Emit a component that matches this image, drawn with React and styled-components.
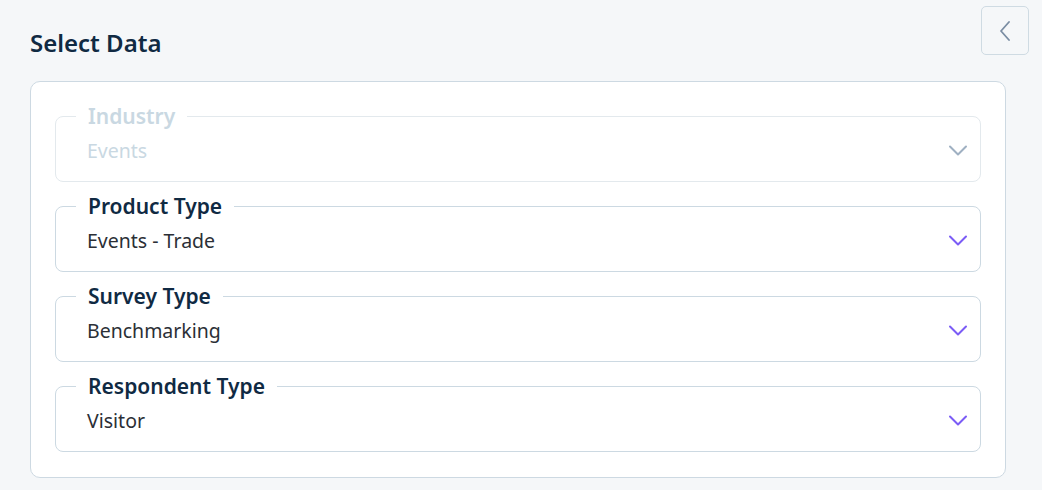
import React from "react";
import styled, { createGlobalStyle } from "styled-components";

const Global = createGlobalStyle`
  html, body { margin: 0; padding: 0; background: #f5f7f9; }
  body { font-family: "Noto Sans", "Open Sans", sans-serif; }
  * { box-sizing: border-box; }
`;

const Page = styled.div`
  width: 1042px;
  height: 490px;
  padding: 6px 13px 0 30px;
  background: #f5f7f9;
`;

const Header = styled.div`
  display: flex;
  justify-content: space-between;
  align-items: flex-start;
`;

const Title = styled.h1`
  margin: 21px 0 0;
  font-size: 24px;
  line-height: 32px;
  font-weight: 600;
  color: #102a43;
`;

const BackButton = styled.button`
  width: 48px;
  height: 49px;
  border: 1px solid #cfdbe3;
  border-radius: 5px;
  background: #f5f7f9;
  display: flex;
  align-items: center;
  justify-content: center;
  padding: 0;
  cursor: pointer;
`;

const Card = styled.div`
  margin: 22px 23px 0 0;
  background: #fff;
  border: 1px solid #cdd9e2;
  border-radius: 10px;
  padding: 22px 24px 25px 24px;
  display: flex;
  flex-direction: column;
  gap: 12px;
`;

const Field = styled.fieldset`
  margin: 0;
  padding: 0 12px 0 20px;
  border: 1px solid ${(p) => (p.$disabled ? "#e3e9ed" : "#ccd9e2")};
  border-radius: 8px;
  min-width: 0;
`;

const Legend = styled.legend`
  padding: 0 12px;
  font-size: 21px;
  line-height: 24px;
  font-weight: 600;
  color: ${(p) => (p.$disabled ? "#c9d8e2" : "#102a43")};
`;

const Row = styled.div`
  display: flex;
  align-items: center;
  justify-content: space-between;
  height: 24px;
  margin: 11px 0 18px;
  padding-left: 11px;
`;

const Value = styled.span`
  font-size: 19.5px;
  line-height: 24px;
  color: ${(p) => (p.$disabled ? "#c9d8e2" : "#2b2f36")};
`;

const Chevron = ({ color }) => (
  <svg width="20" height="12" viewBox="0 0 20 12" fill="none">
    <path d="M2 1.5 L10 9.5 L18 1.5" stroke={color} strokeWidth="2" strokeLinecap="round" strokeLinejoin="round" />
  </svg>
);

const fields = [
  { label: "Industry", value: "Events", disabled: true },
  { label: "Product Type", value: "Events - Trade" },
  { label: "Survey Type", value: "Benchmarking" },
  { label: "Respondent Type", value: "Visitor" },
];

export default function App() {
  return (
    <Page>
      <Global />
      <Header>
        <Title>Select Data</Title>
        <BackButton aria-label="Back">
          <svg width="12" height="20" viewBox="0 0 12 20" fill="none">
            <path d="M10 1 L2 10 L10 19" stroke="#7a8da3" strokeWidth="1.8" strokeLinecap="round" strokeLinejoin="round" />
          </svg>
        </BackButton>
      </Header>
      <Card>
        {fields.map((f) => (
          <Field key={f.label} $disabled={f.disabled}>
            <Legend $disabled={f.disabled}>{f.label}</Legend>
            <Row>
              <Value $disabled={f.disabled}>{f.value}</Value>
              <Chevron color={f.disabled ? "#9fb0c2" : "#7b5cf6"} />
            </Row>
          </Field>
        ))}
      </Card>
    </Page>
  );
}
